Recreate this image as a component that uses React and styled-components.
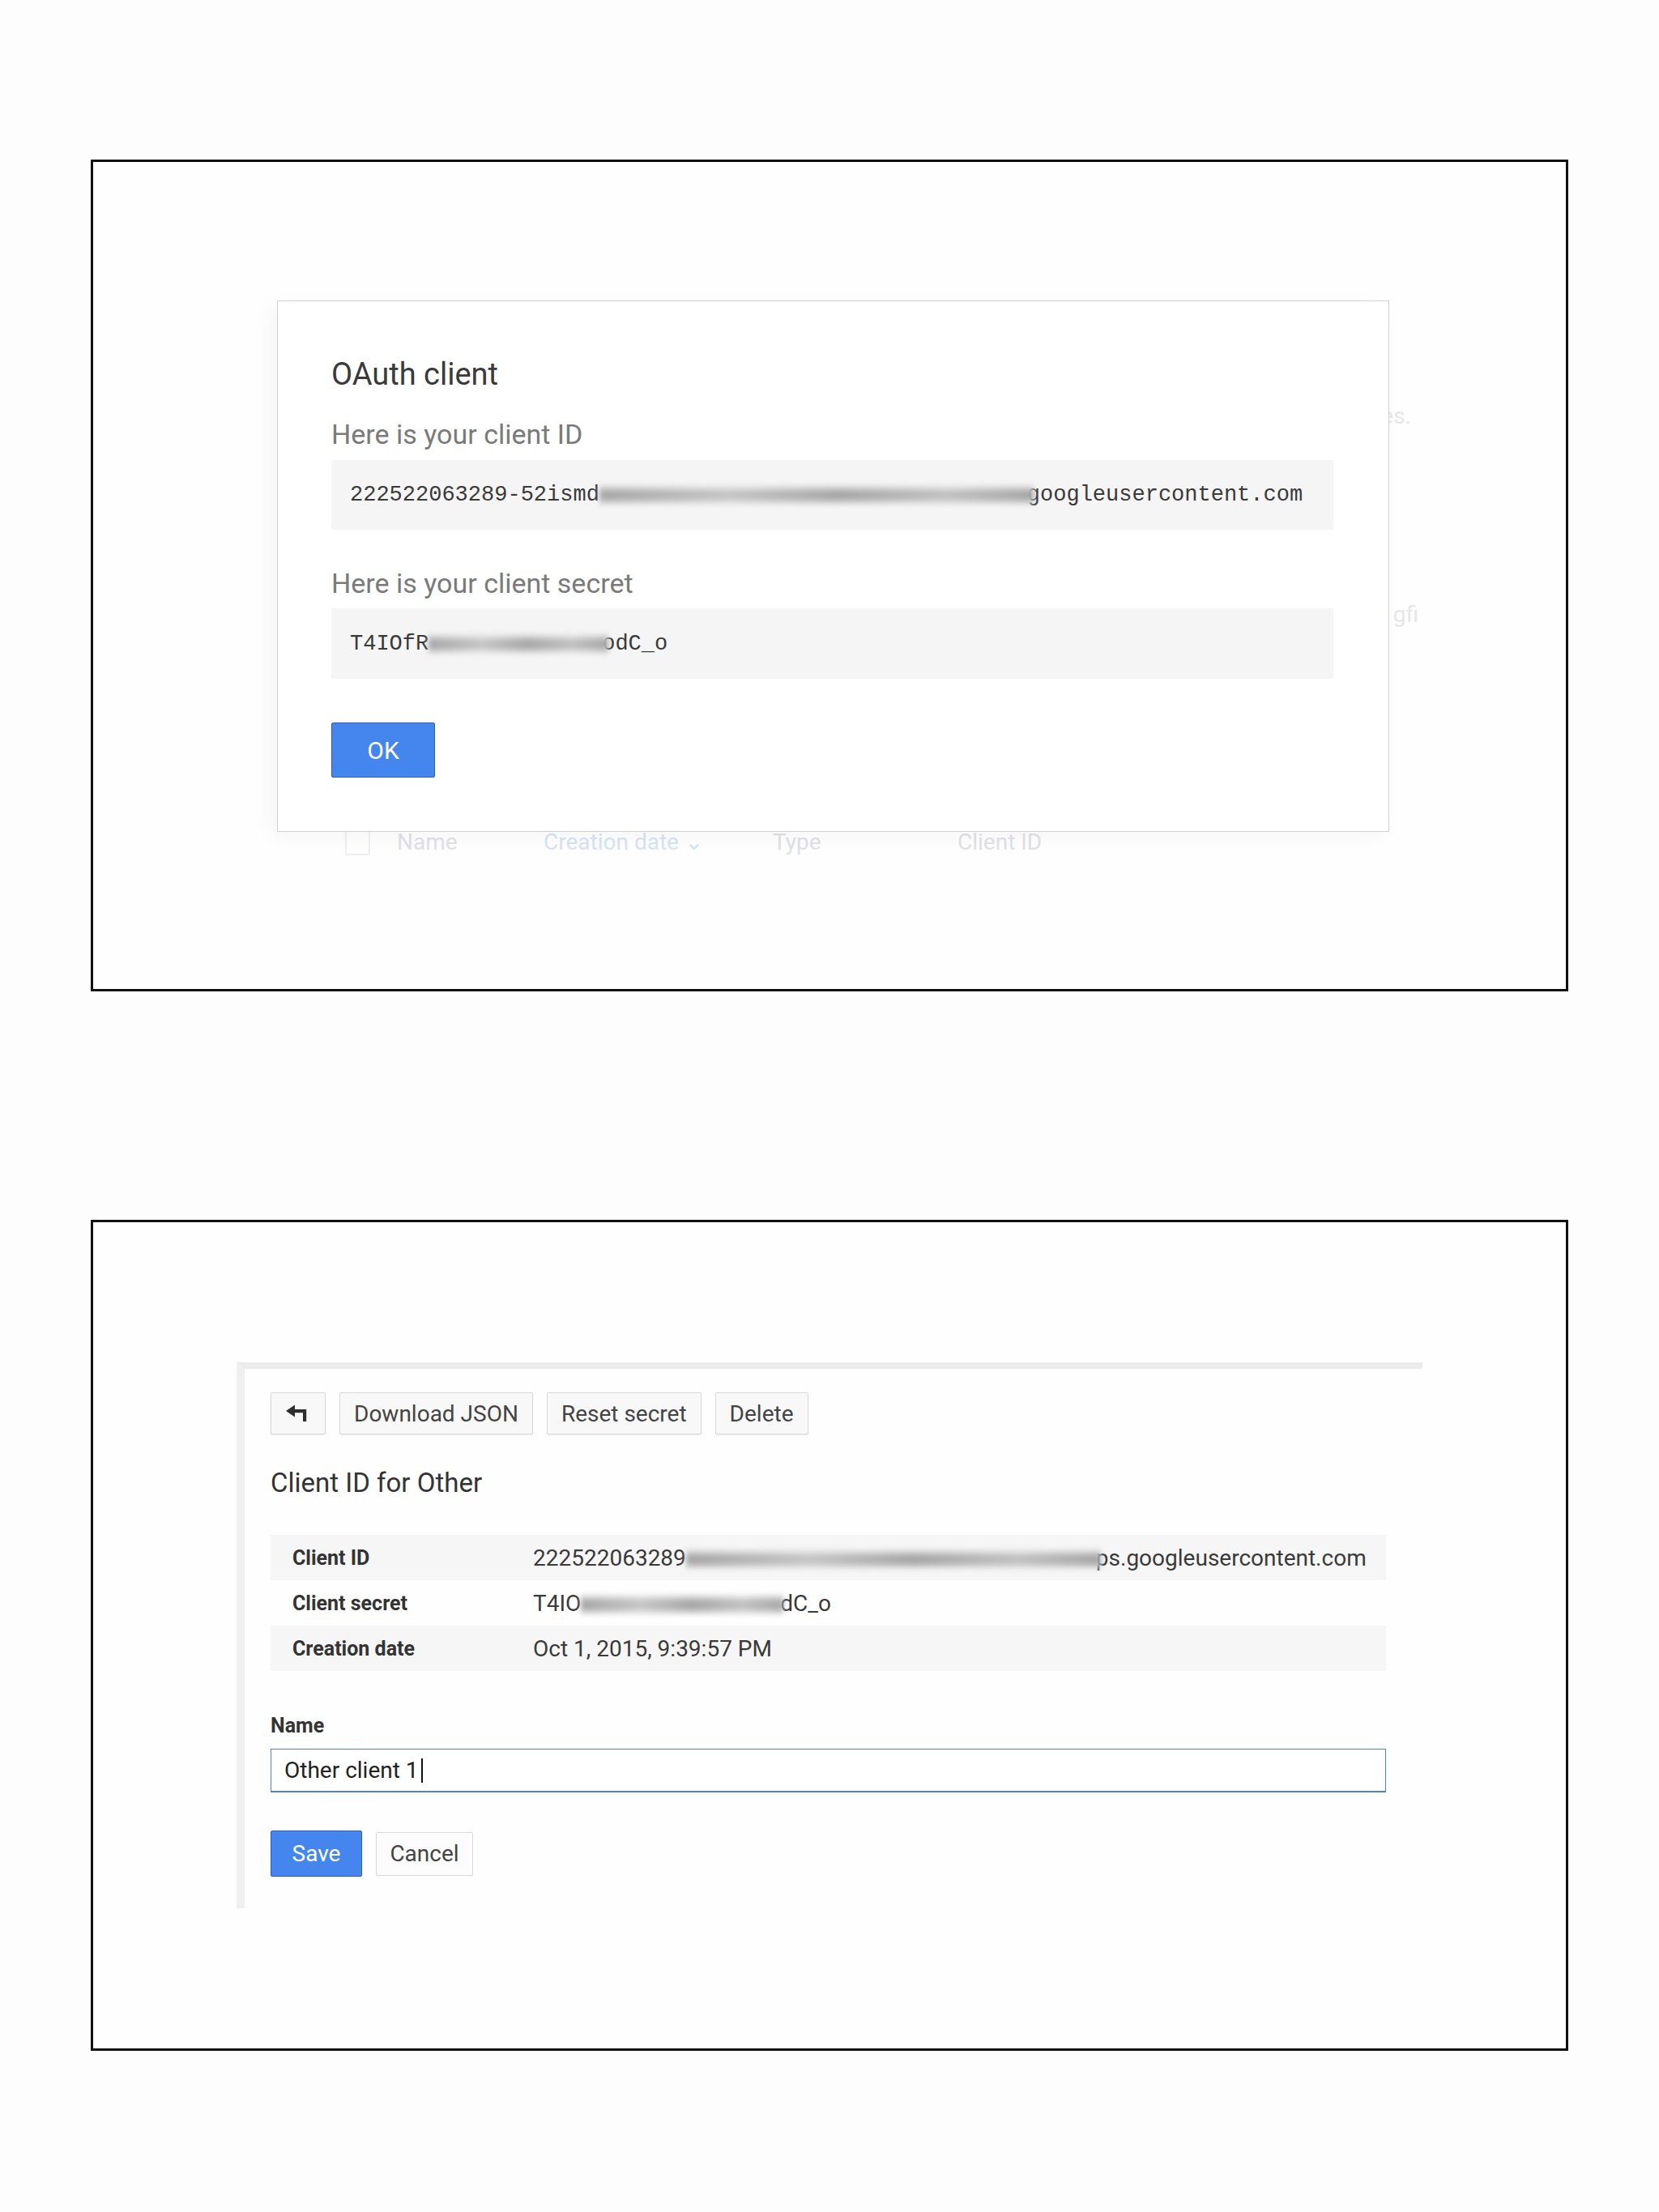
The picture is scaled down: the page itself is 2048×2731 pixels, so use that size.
import styled, { createGlobalStyle } from 'styled-components';

const GlobalStyle = createGlobalStyle`
  html, body {
    margin: 0;
    padding: 0;
    background: #fdfdfd;
  }
  body {
    font-family: Roboto, "Liberation Sans", sans-serif;
  }
`;

const Page = styled.div`
  display: flex;
  flex-direction: column;
  align-items: center;
  gap: 282px;
  padding: 197px 0 199px;
`;

const Frame = styled.section`
  position: relative;
  box-sizing: border-box;
  width: 1824px;
  height: ${(p) => p.$h}px;
  border: 3px solid #111;
  background: #fefefe;
  overflow: hidden;
`;

/* faint console page sitting behind the modal */
const Backdrop = styled.div`
  padding: 297px 0 0 227px;
  font-size: 28px;
  line-height: 34px;
  color: #e6e6ea;
`;

const GhostLine = styled.div`
  width: ${(p) => p.$w}px;
  margin-top: ${(p) => p.$mt || 0}px;
  text-align: right;
  white-space: nowrap;
`;

const GhostHeader = styled.div`
  display: flex;
  align-items: center;
  height: 32px;
  margin-top: 248px;
  padding-left: 84px;
`;

const GhostCheck = styled.span`
  box-sizing: border-box;
  width: 31px;
  height: 31px;
  margin-right: 33px;
  border: 2px solid #eeeef2;
  border-radius: 2px;
`;

const GhostCell = styled.span`
  width: ${(p) => p.$w}px;
  color: ${(p) => (p.$active ? '#d6e2f6' : '#e0e0e6')};
`;

const Dialog = styled.div`
  position: absolute;
  left: 227px;
  top: 171px;
  box-sizing: border-box;
  width: 1373px;
  height: 656px;
  padding: 67px 68px 66px 66px;
  background: #fff;
  border: 1px solid #d2d2d2;
  box-shadow: -8px 6px 24px rgba(0, 0, 0, 0.04);
`;

const DialogTitle = styled.h2`
  margin: 0;
  font-size: 38px;
  line-height: 46px;
  font-weight: 400;
  color: #3a3a3a;
`;

const FieldLabel = styled.div`
  margin-top: ${(p) => p.$mt}px;
  font-size: 34px;
  line-height: 40px;
  color: #7a7a7a;
`;

const CodeBox = styled.div`
  display: flex;
  align-items: center;
  box-sizing: border-box;
  height: ${(p) => p.$h}px;
  margin-top: ${(p) => p.$mt}px;
  padding-left: 23px;
  background: #f5f5f5;
  font-family: "Liberation Mono", "DejaVu Sans Mono", monospace;
  font-size: 27px;
  color: #3a3a3a;
  white-space: nowrap;
`;

const Redacted = styled.span`
  position: relative;
  z-index: 1;
  display: inline-block;
  width: ${(p) => p.$w}px;
  height: 24px;
  margin-right: ${(p) => p.$overlap || 0}px;
  background:
    linear-gradient(90deg, rgba(255, 255, 255, 0) 0%, rgba(255, 255, 255, 0.35) 30%, rgba(255, 255, 255, 0) 55%, rgba(255, 255, 255, 0.3) 80%, rgba(255, 255, 255, 0) 100%),
    linear-gradient(180deg, #e4e4e4 0%, #bdbdbd 25%, #9c9c9c 50%, #b4b4b4 72%, #e0e0e0 100%);
  filter: blur(3px);
  vertical-align: middle;
`;

const PrimaryButton = styled.button`
  box-sizing: border-box;
  width: ${(p) => p.$w}px;
  height: ${(p) => p.$h}px;
  margin-top: ${(p) => p.$mt || 0}px;
  padding: 0;
  background: #4586ee;
  border: 1px solid #2e5fb4;
  border-radius: 2px;
  color: #fff;
  font-family: Roboto, "Liberation Sans", sans-serif;
  font-size: ${(p) => p.$fs || 28}px;
`;

const Panel = styled.div`
  box-sizing: border-box;
  width: 1464px;
  height: 674px;
  margin: 173px 0 0 177px;
  padding: 29px 45px 0 32px;
  border-top: 8px solid #ebebeb;
  border-left: 10px solid #efefef;
`;

const Toolbar = styled.div`
  display: flex;
  gap: 17px;
  height: 52px;
`;

const ToolButton = styled.button`
  display: flex;
  align-items: center;
  justify-content: center;
  box-sizing: border-box;
  height: 52px;
  padding: 0 ${(p) => (p.$icon ? 0 : 17)}px;
  width: ${(p) => (p.$icon ? '68px' : 'auto')};
  background: #f8f8f8;
  border: 1px solid #d8d8d8;
  border-radius: 2px;
  box-shadow: 0 1px 1px rgba(0, 0, 0, 0.08);
  color: #444;
  font-family: Roboto, "Liberation Sans", sans-serif;
  font-size: 28px;
`;

const PanelTitle = styled.h3`
  margin: 40px 0 0;
  font-size: 33px;
  line-height: 40px;
  font-weight: 400;
  color: #333;
`;

const InfoTable = styled.div`
  margin-top: 44px;
`;

const InfoRow = styled.div`
  display: grid;
  grid-template-columns: 297px 1fr;
  align-items: center;
  height: 56px;
  padding-left: 27px;
  background: ${(p) => (p.$shaded ? '#f6f6f7' : 'transparent')};
  font-size: 28px;
  color: #3a3a3a;
  white-space: nowrap;
`;

const RowLabel = styled.span`
  font-size: 25px;
  font-weight: 700;
  color: #333;
`;

const NameLabel = styled.label`
  display: block;
  margin-top: 53px;
  font-size: 25px;
  line-height: 30px;
  font-weight: 700;
  color: #333;
`;

const TextInput = styled.div`
  display: flex;
  align-items: center;
  box-sizing: border-box;
  height: 54px;
  margin-top: 13px;
  padding-left: 16px;
  background: #fff;
  border: 1px solid #4f80d2;
  border-bottom-width: 2px;
  font-size: 28px;
  color: #222;
`;

const Caret = styled.span`
  display: inline-block;
  width: 2px;
  height: 30px;
  margin-left: 3px;
  background: #111;
`;

const FormActions = styled.div`
  display: flex;
  align-items: center;
  gap: 17px;
  margin-top: 47px;
`;

const SecondaryButton = styled.button`
  box-sizing: border-box;
  width: 120px;
  height: 54px;
  padding: 0;
  background: #fcfcfc;
  border: 1px solid #d8d8d8;
  border-radius: 2px;
  color: #444;
  font-family: Roboto, "Liberation Sans", sans-serif;
  font-size: 28px;
`;

const BackIcon = () => (
  <svg width="32" height="22" viewBox="0 0 32 22">
    <polygon points="1,8 12,0.5 12,15.5" fill="#2f2f2f" />
    <rect x="11" y="6" width="15" height="4.2" fill="#2f2f2f" />
    <rect x="22" y="6" width="4.2" height="15" fill="#2f2f2f" />
  </svg>
);

export default function App() {
  return (
    <>
      <GlobalStyle />
      <Page>
        <Frame $h={1027}>
          <Backdrop>
            <GhostLine $w={1400}>Credentials let you access APIs and services.</GhostLine>
            <GhostLine $w={1409} $mt={211}>222522063289-52ismd.apps.googleusercontent.com gfi</GhostLine>
            <GhostHeader>
              <GhostCheck />
              <GhostCell $w={181}>Name</GhostCell>
              <GhostCell $w={283} $active>Creation date ⌄</GhostCell>
              <GhostCell $w={228}>Type</GhostCell>
              <GhostCell $w={200}>Client ID</GhostCell>
            </GhostHeader>
          </Backdrop>

          <Dialog>
            <DialogTitle>OAuth client</DialogTitle>
            <FieldLabel $mt={31}>Here is your client ID</FieldLabel>
            <CodeBox $mt={12} $h={86}>
              222522063289-52ismd
              <Redacted $w={536} $overlap={-8} />
              googleusercontent.com
            </CodeBox>
            <FieldLabel $mt={46}>Here is your client secret</FieldLabel>
            <CodeBox $mt={11} $h={87}>
              T4IOfR
              <Redacted $w={222} $overlap={-8} />
              odC_o
            </CodeBox>
            <PrimaryButton $w={128} $h={68} $mt={54} $fs={30}>OK</PrimaryButton>
          </Dialog>
        </Frame>

        <Frame $h={1026}>
          <Panel>
            <Toolbar>
              <ToolButton $icon aria-label="Back">
                <BackIcon />
              </ToolButton>
              <ToolButton>Download JSON</ToolButton>
              <ToolButton>Reset secret</ToolButton>
              <ToolButton>Delete</ToolButton>
            </Toolbar>

            <PanelTitle>Client ID for Other</PanelTitle>

            <InfoTable>
              <InfoRow $shaded>
                <RowLabel>Client ID</RowLabel>
                <span>
                  222522063289
                  <Redacted $w={512} $overlap={-6} />
                  ps.googleusercontent.com
                </span>
              </InfoRow>
              <InfoRow>
                <RowLabel>Client secret</RowLabel>
                <span>
                  T4IO
                  <Redacted $w={250} $overlap={-4} />
                  dC_o
                </span>
              </InfoRow>
              <InfoRow $shaded>
                <RowLabel>Creation date</RowLabel>
                <span>Oct 1, 2015, 9:39:57 PM</span>
              </InfoRow>
            </InfoTable>

            <NameLabel>Name</NameLabel>
            <TextInput>
              Other client 1
              <Caret />
            </TextInput>

            <FormActions>
              <PrimaryButton $w={113} $h={57}>Save</PrimaryButton>
              <SecondaryButton>Cancel</SecondaryButton>
            </FormActions>
          </Panel>
        </Frame>
      </Page>
    </>
  );
}
